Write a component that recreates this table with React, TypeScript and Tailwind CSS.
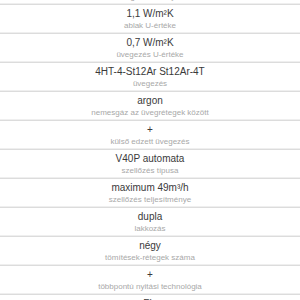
import React from "react";

const rows: [string, string][] = [
  ["1,4 W/m²K", "hőszigetelési tényező"],
  ["1,1 W/m²K", "ablak U-értéke"],
  ["0,7 W/m²K", "üvegezés U-értéke"],
  ["4HT-4-St12Ar St12Ar-4T", "üvegezés"],
  ["argon", "nemesgáz az üvegrétegek között"],
  ["+", "külső edzett üvegezés"],
  ["V40P automata", "szellőzés típusa"],
  ["maximum 49m³/h", "szellőzés teljesítménye"],
  ["dupla", "lakkozás"],
  ["négy", "tömítések-rétegek száma"],
  ["+", "többpontú nyitási technológia"],
  ["Fix", "rögzítés"],
];

export default function App() {
  return (
    <div
      className="w-[300px] h-[300px] overflow-hidden bg-white"
      style={{ fontFamily: '"Liberation Sans", Arial, sans-serif' }}
    >
      <div className="-mt-[25px]">
        {rows.map(([v, l], i) => (
          <div
            key={i}
            className="border-t border-b border-t-[#dcdcdc] border-b-[#efefef] text-center pt-[2px] pb-[1px]"
          >
            <div className="text-[10px] leading-[14px] text-[#3a3a3a]">{v}</div>
            <div className="text-[8px] leading-[10px] text-[#a8a8a8]">{l}</div>
          </div>
        ))}
      </div>
    </div>
  );
}
